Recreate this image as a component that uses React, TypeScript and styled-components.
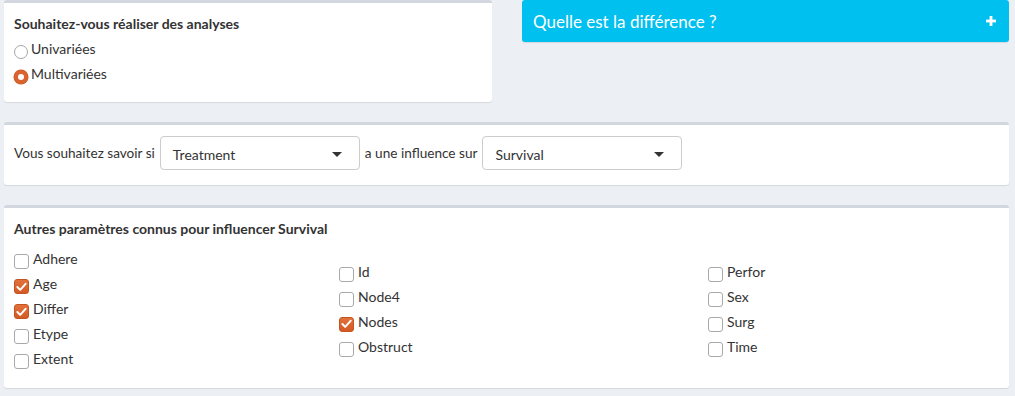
import { useState, ReactElement } from 'react';
import styled, { createGlobalStyle } from 'styled-components';

const GlobalStyle = createGlobalStyle`
  html, body {
    margin: 0;
    padding: 0;
    background: #ecf0f5;
    font-family: 'Lato', 'Liberation Sans', sans-serif;
    font-size: 14px;
    color: #333;
  }
`;

const LEFT_VARS = ['Adhere', 'Age', 'Differ', 'Etype', 'Extent'];
const MID_VARS = ['Id', 'Node4', 'Nodes', 'Obstruct'];
const RIGHT_VARS = ['Perfor', 'Sex', 'Surg', 'Time'];

function App(): ReactElement {
  const [mode, setMode] = useState<string>('multi');
  const [checked, setChecked] = useState<string[]>(['Age', 'Differ', 'Nodes']);

  const toggle = (name: string) => {
    setChecked(prev =>
      prev.includes(name) ? prev.filter(n => n !== name) : [...prev, name],
    );
  };

  const renderColumn = (vars: string[]) => (
    <CheckColumn>
      {vars.map(v => (
        <CheckRow key={v} onClick={() => toggle(v)}>
          <CheckBox on={checked.includes(v)}>
            {checked.includes(v) && (
              <svg width="11" height="10" viewBox="0 0 11 10">
                <path
                  d="M1.4 5 L4.2 7.9 L9.6 1.8"
                  fill="none"
                  stroke="#fff"
                  strokeWidth="2"
                  strokeLinecap="round"
                  strokeLinejoin="round"
                />
              </svg>
            )}
          </CheckBox>
          {v}
        </CheckRow>
      ))}
    </CheckColumn>
  );

  return (
    <Page>
      <GlobalStyle />
      <TopRow>
        <Box bottom={16}>
          <BoxTitle>Souhaitez-vous réaliser des analyses</BoxTitle>
          <RadioRow onClick={() => setMode('uni')}>
            <Radio on={mode === 'uni'} />
            Univariées
          </RadioRow>
          <RadioRow onClick={() => setMode('multi')}>
            <Radio on={mode === 'multi'} />
            Multivariées
          </RadioRow>
        </Box>
        <InfoBar>
          <span>Quelle est la différence ?</span>
          <PlusIcon>
            <svg width="10" height="10" viewBox="0 0 10 10">
              <rect x="3.6" y="0" width="2.8" height="10" fill="#fff" />
              <rect x="0" y="3.6" width="10" height="2.8" fill="#fff" />
            </svg>
          </PlusIcon>
        </InfoBar>
      </TopRow>

      <Box top={11} bottom={15}>
        <QuestionRow>
          <span>Vous souhaitez savoir si</span>
          <Select>
            Treatment
            <Caret />
          </Select>
          <span>a une influence sur</span>
          <Select>
            Survival
            <Caret />
          </Select>
        </QuestionRow>
      </Box>

      <Box bottom={17}>
        <BoxTitle>Autres paramètres connus pour influencer Survival</BoxTitle>
        <CheckGrid>
          {renderColumn(LEFT_VARS)}
          {renderColumn(MID_VARS)}
          {renderColumn(RIGHT_VARS)}
        </CheckGrid>
      </Box>
    </Page>
  );
}

export default App;

const Page = styled.div`
  display: flex;
  flex-direction: column;
  gap: 20px;
  padding: 0 6px 8px 4px;
`;

const TopRow = styled.div`
  display: grid;
  grid-template-columns: 488px 487px;
  column-gap: 30px;
  align-items: start;
`;

const Box = styled.div<{ top?: number; bottom?: number }>`
  background: #fff;
  border-top: 3px solid #d2d6de;
  border-radius: 3px;
  box-shadow: 0 1px 1px rgba(0, 0, 0, 0.1);
  padding: ${p => p.top ?? 10}px 10px ${p => p.bottom ?? 10}px 10px;
`;

const BoxTitle = styled.div`
  font-weight: 700;
  font-size: 14px;
  line-height: 20px;
  margin: 1px 0 2px;
`;

const RadioRow = styled.label`
  display: flex;
  align-items: center;
  height: 25px;
  cursor: pointer;
`;

const Radio = styled.span<{ on: boolean }>`
  width: 14px;
  height: 14px;
  box-sizing: border-box;
  border-radius: 50%;
  margin-right: 3px;
  margin-top: 6px;
  border: ${p => (p.on ? '4.5px solid #d9642f' : '1px solid #a6a6a6')};
  background: #fff;
  box-shadow: ${p => (p.on ? '0 0 0 0.5px #c4541f' : 'none')};
`;

const InfoBar = styled.div`
  background: #00c0ef;
  color: #fff;
  border-radius: 3px;
  height: 42px;
  display: flex;
  align-items: center;
  justify-content: space-between;
  padding: 0 13px 0 11px;
  font-size: 17px;
  box-shadow: 0 1px 1px rgba(0, 0, 0, 0.1);
`;

const PlusIcon = styled.span`
  display: flex;
  align-items: center;
`;

const QuestionRow = styled.div`
  display: flex;
  align-items: center;
  gap: 5px;
  font-size: 13.6px;
`;

const Select = styled.div`
  width: 200px;
  height: 34px;
  box-sizing: border-box;
  border: 1px solid #ccc;
  border-radius: 4px;
  display: flex;
  align-items: center;
  justify-content: space-between;
  padding: 2px 17px 0 12px;
  font-size: 14px;
  background: #fff;
`;

const Caret = styled.span`
  width: 0;
  height: 0;
  border-left: 5px solid transparent;
  border-right: 5px solid transparent;
  border-top: 5px solid #333;
`;

const CheckGrid = styled.div`
  display: grid;
  grid-template-columns: 325px 369px 1fr;
  align-items: center;
  margin-top: 7px;
`;

const CheckColumn = styled.div`
  display: flex;
  flex-direction: column;
`;

const CheckRow = styled.label`
  display: flex;
  align-items: center;
  height: 25px;
  cursor: pointer;
`;

const CheckBox = styled.span<{ on: boolean }>`
  width: 15px;
  height: 15px;
  box-sizing: border-box;
  border-radius: 3px;
  margin-right: 4px;
  margin-top: 6px;
  display: flex;
  align-items: center;
  justify-content: center;
  border: 1px solid ${p => (p.on ? '#c4541f' : '#a9a9a9')};
  background: ${p => (p.on ? 'linear-gradient(#e2713c, #d45a24)' : '#fff')};
`;
